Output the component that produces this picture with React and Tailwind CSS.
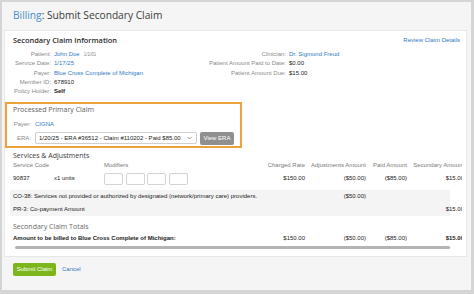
import React from 'react';

const sans = { fontFamily: '"Liberation Sans", Arial, sans-serif' };

function InfoRow({ label, children, labelWidth }) {
  return (
    <div className="flex h-[9.3px] items-center">
      <span className={`${labelWidth} shrink-0 text-right text-[#8a8a8a]`}>{label}</span>
      <span className="ml-[3px] whitespace-nowrap">{children}</span>
    </div>
  );
}

function Cols({ cells, className = '' }) {
  // column widths of the services table
  return (
    <div className={`flex w-[451px] items-center ${className}`}>
      <div className="w-[41px] shrink-0">{cells[0]}</div>
      <div className="w-[50px] shrink-0">{cells[1]}</div>
      <div className="w-[151px] shrink-0">{cells[2]}</div>
      <div className="w-[50px] shrink-0 text-right">{cells[3]}</div>
      <div className="w-[61px] shrink-0 text-right">{cells[4]}</div>
      <div className="w-[41px] shrink-0 text-right">{cells[5]}</div>
      <div className="w-[57px] shrink-0 whitespace-nowrap text-right">{cells[6]}</div>
    </div>
  );
}

export default function App() {
  return (
    <div className="h-[294px] w-[474px] overflow-hidden bg-[#d5d5d5] pb-[4px] pl-[2px] pr-[3px] pt-[2px]" style={sans}>
      <div className="flex h-full flex-col bg-[#f5f5f5]">
        {/* page title */}
        <div className="flex h-[28px] shrink-0 items-center pl-[11px] text-[10.2px] text-[#3b3b3b]" style={{ fontFamily: '"Open Sans", sans-serif' }}>
          <span className="text-[#4a8cc6]">Billing</span>
          <span>: Submit Secondary Claim</span>
        </div>

        {/* main card */}
        <div className="ml-[2px] mr-[4px] h-[227px] shrink-0 border border-[#e7e7e7] bg-white text-[6px] text-[#222]">
          <div className="flex h-[19px] items-center justify-between pl-[8px] pr-[6px]">
            <span className="text-[7.4px] font-semibold text-[#2b2b2b]" style={{ fontFamily: '"Open Sans", sans-serif' }}>
              Secondary Claim Information
            </span>
            <span className="text-[#2f7bbf]">Review Claim Details</span>
          </div>

          <div className="flex pl-[8px]">
            <div className="w-[194px] shrink-0">
              <InfoRow label="Patient:" labelWidth="w-[38px]">
                <span className="text-[#2f7bbf]">John Doe</span>
                <span className="ml-[4px] text-[4.5px] text-[#8a8a8a]">1/1/01</span>
              </InfoRow>
              <InfoRow label="Service Date:" labelWidth="w-[38px]">
                <span className="text-[#2f7bbf]">1/17/25</span>
              </InfoRow>
              <InfoRow label="Payer:" labelWidth="w-[38px]">
                <span className="text-[#2f7bbf]">Blue Cross Complete of Michigan</span>
              </InfoRow>
              <InfoRow label="Member ID:" labelWidth="w-[38px]">678910</InfoRow>
              <InfoRow label="Policy Holder:" labelWidth="w-[38px]">
                <span className="font-bold">Self</span>
              </InfoRow>
            </div>
            <div>
              <InfoRow label="Clinician:" labelWidth="w-[79px]">
                <span className="text-[#2f7bbf]">Dr. Sigmund Freud</span>
              </InfoRow>
              <InfoRow label="Patient Amount Paid to Date:" labelWidth="w-[79px]">$0.00</InfoRow>
              <InfoRow label="Patient Amount Due:" labelWidth="w-[79px]">$15.00</InfoRow>
            </div>
          </div>

          {/* processed primary claim */}
          <div className="mt-[5.5px] w-[237px] border-2 border-[#eba43c] pb-[1px] pl-[6px]">
            <div className="flex h-[12px] items-center text-[7px] text-[#5e5e5e]" style={{ fontFamily: '"Open Sans", sans-serif' }}>
              Processed Primary Claim
            </div>
            <div className="mt-[4px] flex h-[10px] items-center">
              <span className="w-[18px] text-right text-[#8a8a8a]">Payer:</span>
              <span className="ml-[4px] text-[#2f7bbf]">CIGNA</span>
            </div>
            <div className="mt-[2px] flex h-[13px] items-center">
              <span className="w-[18px] text-right text-[#8a8a8a]">ERA:</span>
              <div className="ml-[4px] flex h-[12px] w-[162px] items-center justify-between rounded-[2px] border border-[#cfcfcf] pl-[3px] pr-[4px]">
                <span className="whitespace-nowrap">1/20/25 - ERA #36512 - Claim #110202 - Paid $85.00</span>
                <svg width="5" height="4" viewBox="0 0 10 6" fill="none" stroke="#777" strokeWidth="1.6">
                  <path d="M1 1l4 4 4-4" />
                </svg>
              </div>
              <div className="ml-[3px] flex h-[13px] w-[34px] items-center justify-center rounded-[2px] bg-[#8f8f8f] text-white">
                View ERA
              </div>
            </div>
          </div>

          {/* services & adjustments */}
          <div className="mt-[3px] flex h-[11px] items-center pl-[8px] text-[7px] text-[#3a3a3a]" style={{ fontFamily: '"Open Sans", sans-serif' }}>
            Services &amp; Adjustments
          </div>

          <div className="ml-[5px] w-[452px] overflow-hidden">
            <Cols
              className="h-[8px] pl-[3px] text-[#7a7a7a]"
              cells={['Service Code', '', 'Modifiers', 'Charged Rate', 'Adjustments Amount', 'Paid Amount', 'Secondary Amount']}
            />
            <Cols
              className="mt-[2px] h-[14px] pl-[3px]"
              cells={[
                '90837',
                'x1 units',
                <div className="flex gap-[2.5px]">
                  {[0, 1, 2, 3].map((i) => (
                    <div key={i} className="h-[12px] w-[19px] rounded-[2px] border border-[#d3d3d3]" />
                  ))}
                </div>,
                '$150.00',
                '($50.00)',
                '($85.00)',
                '$15.00',
              ]}
            />
            <div className="mt-[4px] bg-[linear-gradient(to_right,#f4f4f4_440px,transparent_440px)]">
              <div className="flex h-[13px] w-[451px] items-center pl-[3px]">
                <div className="w-[242px] shrink-0 whitespace-nowrap">
                  CO-38: Services not provided or authorized by designated (network/primary care) providers.
                </div>
                <div className="w-[50px] shrink-0" />
                <div className="w-[61px] shrink-0 text-right">($50.00)</div>
              </div>
              <div className="flex h-[13.5px] w-[451px] items-center pl-[3px]">
                <div className="w-[242px] shrink-0 whitespace-nowrap">PR-3: Co-payment Amount</div>
                <div className="w-[152px] shrink-0" />
                <div className="w-[57px] shrink-0 text-right">$15.00</div>
              </div>
            </div>
          </div>

          <div className="mt-[3.5px] flex h-[14px] items-center pl-[8px] text-[7px] text-[#6a6a6a]" style={{ fontFamily: '"Open Sans", sans-serif' }}>
            Secondary Claim Totals
          </div>
          <div className="ml-[5px] w-[452px] overflow-hidden">
            <div className="flex h-[10px] w-[451px] items-center pl-[3px]">
              <div className="w-[242px] shrink-0 whitespace-nowrap font-bold">
                Amount to be billed to Blue Cross Complete of Michigan:
              </div>
              <div className="w-[50px] shrink-0 text-right">$150.00</div>
              <div className="w-[61px] shrink-0 text-right">($50.00)</div>
              <div className="w-[41px] shrink-0 text-right">($85.00)</div>
              <div className="w-[57px] shrink-0 text-right font-bold">$15.00</div>
            </div>
            <div className="ml-[5px] mt-[2px] h-[3px] w-[435px] rounded-full bg-[#b4b4b4]" />
          </div>
        </div>

        {/* footer actions */}
        <div className="mt-[6px] flex items-center pl-[11px]">
          <div className="flex h-[13px] w-[43px] items-center justify-center rounded-[2px] bg-[#7cb61a] text-[6px] text-white">
            Submit Claim
          </div>
          <span className="ml-[6px] text-[6px] text-[#2f7bbf]">Cancel</span>
        </div>
      </div>
    </div>
  );
}
